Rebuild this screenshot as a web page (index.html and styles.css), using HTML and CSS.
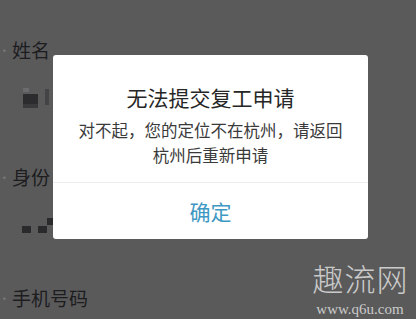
FILE: index.html
```html
<!DOCTYPE html>
<html lang="zh-CN">
<head>
<meta charset="utf-8">
<title>无法提交复工申请</title>
<link rel="stylesheet" href="styles.css">
</head>
<body>
<div class="page">
  <div class="field field-name">
    <div class="label"><span class="req">*</span>姓名</div>
    <div class="value value-name">
      <span class="px px-a"></span>
      <span class="px px-b"></span>
      <span class="px px-c"></span>
    </div>
  </div>
  <div class="field field-id">
    <div class="label"><span class="req">*</span>身份</div>
    <div class="value value-id">
      <span class="sq"></span>
      <span class="sq sq-gap"></span>
      <span class="sq sq-up"></span>
    </div>
  </div>
  <div class="field field-phone">
    <div class="label"><span class="req">*</span>手机号码</div>
  </div>

  <div class="dialog">
    <div class="dialog-body">
      <div class="dialog-title">无法提交复工申请</div>
      <div class="dialog-text">对不起，您的定位不在杭州，请返回<br>杭州后重新申请</div>
    </div>
    <div class="dialog-btn">确定</div>
  </div>

  <div class="watermark">
    <div class="wm-name">趣流网</div>
    <div class="wm-url">www.q6u.com</div>
  </div>
</div>
</body>
</html>
```

FILE: styles.css
```css
html, body {
  margin: 0;
  padding: 0;
}
body {
  background: #5a5a5b;
  width: 416px;
  height: 319px;
  overflow: hidden;
  font-family: "Noto Sans CJK SC", "Noto Sans", sans-serif;
}
.page {
  position: relative;
  width: 416px;
  height: 319px;
  padding-top: 38px;
  box-sizing: border-box;
}
.field {
  display: flex;
  flex-direction: column;
}
.label {
  position: relative;
  padding-left: 12px;
  font-size: 19px;
  line-height: 24px;
  height: 24px;
  color: #1d1d1f;
}
.req {
  position: absolute;
  left: 2px;
  top: 3px;
  font-size: 10px;
  line-height: 24px;
  color: #7a7a7a;
}
.value {
  display: flex;
  padding-left: 22px;
}
.field-name .value {
  margin-top: 26px;
  height: 20px;
  margin-bottom: 57px;
  align-items: flex-start;
  gap: 0;
}
.px-a {
  width: 15px;
  height: 14px;
  margin-top: 6px;
  margin-left: 1px;
  background: #2c2c2e;
  box-shadow: inset 0 -4px 0 #3a3a3c;
}
.px-b {
  width: 6px;
  height: 4px;
  margin-left: -15px;
  background: #6b6b6d;
}
.px-c {
  width: 4px;
  height: 16px;
  margin-left: 16px;
  margin-top: 1px;
  background: #444446;
}
.field-id .value {
  margin-top: 29px;
  height: 15px;
  margin-bottom: 53px;
  align-items: flex-end;
}
.sq {
  width: 9px;
  height: 7px;
  background: #2a2a2c;
}
.sq-gap {
  margin-left: 7px;
}
.sq-up {
  margin-bottom: 8px;
}

.dialog {
  position: absolute;
  left: 53px;
  top: 55px;
  width: 315px;
  height: 184px;
  background: #ffffff;
  border-radius: 3px;
  display: flex;
  flex-direction: column;
  text-align: center;
}
.dialog-body {
  padding-top: 28px;
  padding-bottom: 14px;
  border-bottom: 1px solid #ececec;
}
.dialog-title {
  font-size: 21px;
  line-height: 28px;
  font-weight: 400;
  color: #262626;
}
.dialog-text {
  margin-top: 7px;
  font-size: 16.5px;
  line-height: 25px;
  color: #3a3a3a;
}
.dialog-btn {
  flex: 1;
  display: flex;
  align-items: center;
  justify-content: center;
  font-size: 21px;
  color: #3e98c3;
}

.watermark {
  position: absolute;
  left: 311px;
  top: 263px;
  width: 98px;
  display: flex;
  flex-direction: column;
  align-items: center;
  color: #cacaca;
}
.wm-name {
  font-size: 31px;
  line-height: 30px;
  height: 30px;
  font-weight: 300;
  letter-spacing: 1px;
  padding-left: 1px;
}
.wm-url {
  font-family: "Liberation Serif", serif;
  font-size: 15px;
  line-height: 16px;
  margin-top: 8px;
}
```
